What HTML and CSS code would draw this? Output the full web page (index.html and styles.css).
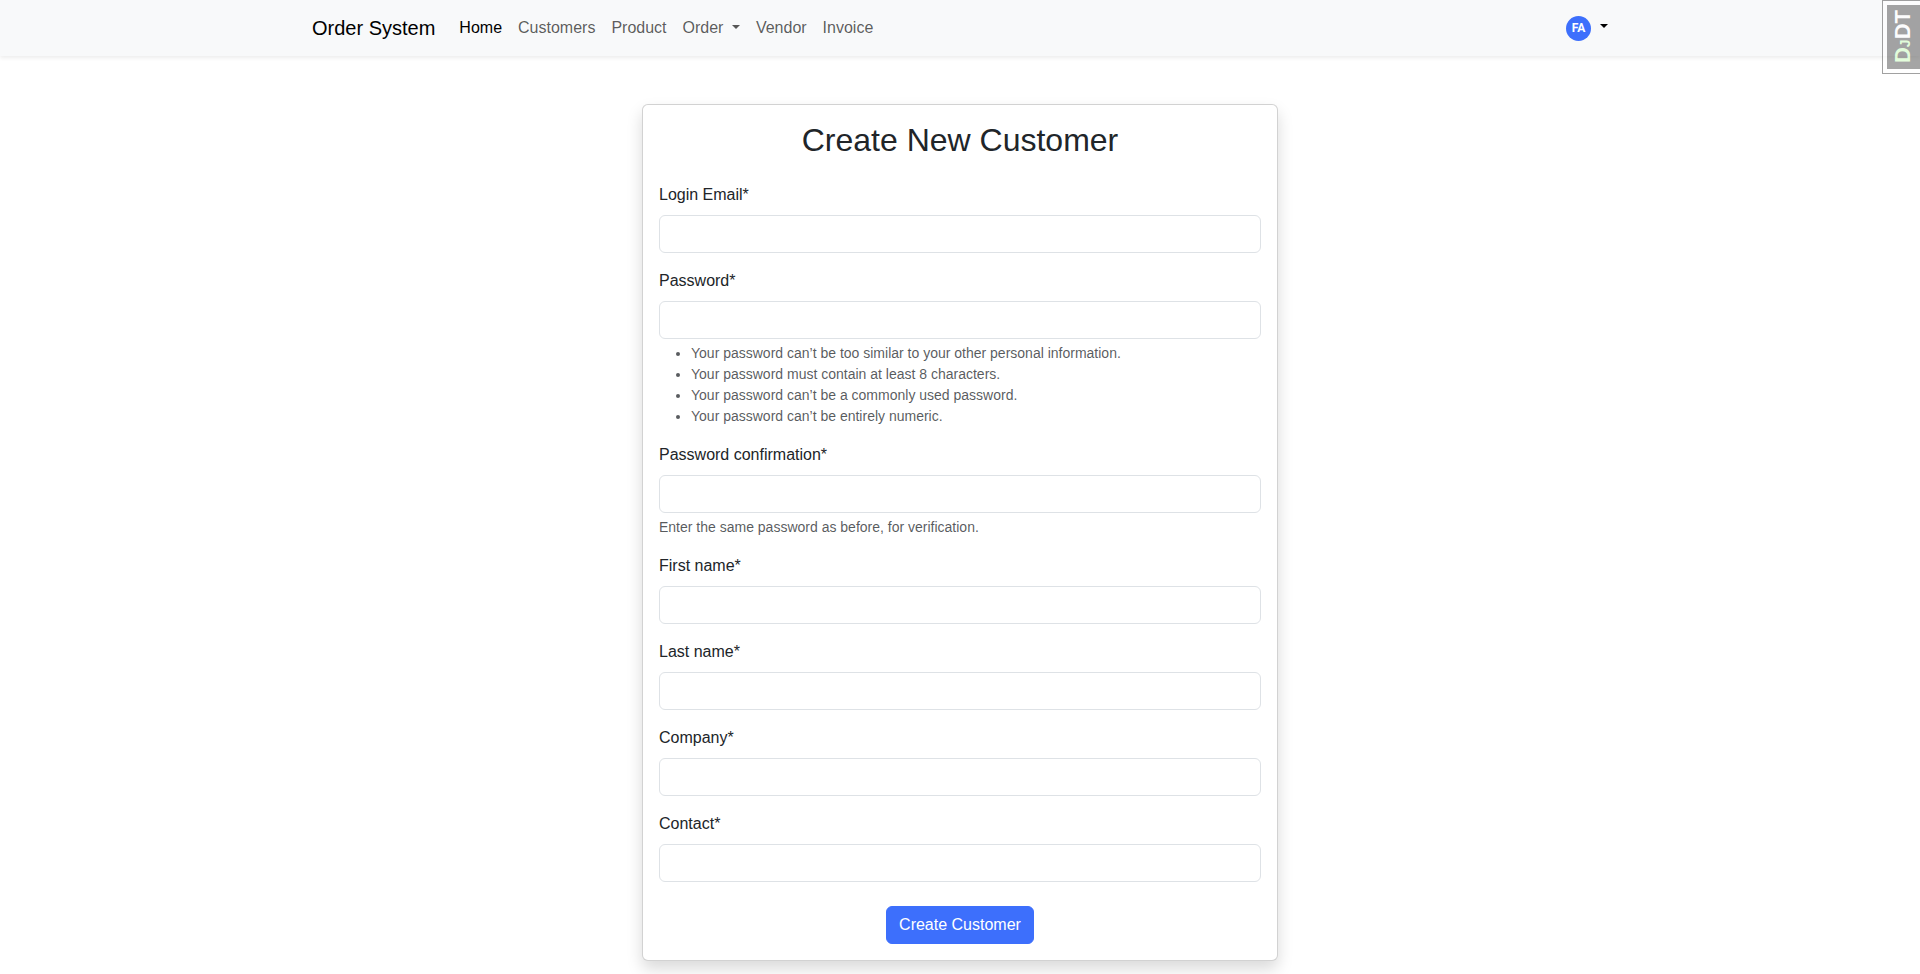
FILE: index.html
```html
<!DOCTYPE html>
<html lang="en">
<head>
  <meta charset="utf-8">
  <meta name="viewport" content="width=device-width, initial-scale=1">
  <title>Create New Customer</title>
  <link rel="stylesheet" href="styles.css">
</head>
<body>
  <header class="navbar">
    <div class="container navbar-inner">
      <a class="brand" href="#">Order System</a>
      <nav class="nav" aria-label="Main">
        <a class="nav-link active" href="#" aria-current="page">Home</a>
        <a class="nav-link" href="#">Customers</a>
        <a class="nav-link" href="#">Product</a>
        <a class="nav-link" href="#" aria-haspopup="true">Order <span class="caret"></span></a>
        <a class="nav-link" href="#">Vendor</a>
        <a class="nav-link" href="#">Invoice</a>
      </nav>
      <button class="account" type="button" aria-label="Account menu"><span class="avatar">FA</span><span class="caret"></span></button>
    </div>
  </header>

  <main class="container">
    <form class="card">
      <h1 class="title">Create New Customer</h1>
      <div class="field">
        <label for="email">Login Email*</label>
        <input class="control" id="email" type="email" required>
      </div>
      <div class="field">
        <label for="password1">Password*</label>
        <input class="control" id="password1" type="password" aria-describedby="password1-help" required>
        <ul class="help help-list" id="password1-help">
          <li>Your password can’t be too similar to your other personal information.</li>
          <li>Your password must contain at least 8 characters.</li>
          <li>Your password can’t be a commonly used password.</li>
          <li>Your password can’t be entirely numeric.</li>
        </ul>
      </div>
      <div class="field">
        <label for="password2">Password confirmation*</label>
        <input class="control" id="password2" type="password" aria-describedby="password2-help" required>
        <p class="help" id="password2-help">Enter the same password as before, for verification.</p>
      </div>
      <div class="field">
        <label for="first-name">First name*</label>
        <input class="control" id="first-name" type="text" required>
      </div>
      <div class="field">
        <label for="last-name">Last name*</label>
        <input class="control" id="last-name" type="text" required>
      </div>
      <div class="field">
        <label for="company">Company*</label>
        <input class="control" id="company" type="text" required>
      </div>
      <div class="field">
        <label for="contact">Contact*</label>
        <input class="control" id="contact" type="text" required>
      </div>
      <button class="submit" type="submit">Create Customer</button>
    </form>
  </main>

  <button class="debug-handle" type="button" title="Show toolbar"><span class="debug-face"><span class="debug-text"><span class="debug-d">D</span><span class="debug-j">J</span>DT</span></span></button>
</body>
</html>
```

FILE: styles.css
```css
*,
*::before,
*::after {
  box-sizing: border-box;
}

body {
  min-height: 100vh;
  margin: 0;
  font-family: "Liberation Sans", Arial, sans-serif;
  font-size: 16px;
  line-height: 24px;
  color: #212529;
  background: #fff;
}

button,
input {
  font: inherit;
}

.container {
  width: 100%;
  max-width: 1320px;
  margin: 0 auto;
  padding: 0 12px;
}

.navbar {
  padding: 8px 0;
  background: #f8f9fa;
  box-shadow: 0 2px 4px rgba(0, 0, 0, 0.075);
}

.navbar-inner {
  display: flex;
  align-items: center;
}

.brand {
  margin-right: 16px;
  font-size: 20px;
  line-height: 30px;
  color: #000;
  text-decoration: none;
}

.nav {
  display: flex;
}

.nav-link {
  padding: 8px;
  color: rgba(0, 0, 0, 0.65);
  text-decoration: none;
}

.nav-link.active {
  color: #000;
}

.caret {
  display: inline-block;
  margin-left: 4px;
  vertical-align: 4px;
  border-top: 4px solid;
  border-right: 4px solid transparent;
  border-left: 4px solid transparent;
}

.account {
  display: flex;
  align-items: center;
  gap: 5px;
  margin-left: auto;
  padding: 0;
  border: 0;
  background: none;
  color: #000;
}

.avatar {
  width: 25px;
  height: 25px;
  border-radius: 50%;
  background: #3d6ffc;
  color: #fff;
  font-family: Roboto, sans-serif;
  font-size: 12px;
  font-weight: 700;
  line-height: 25px;
  text-align: center;
}

.account .caret {
  margin-bottom: 4px;
}

.card {
  display: flex;
  flex-direction: column;
  gap: 16px;
  max-width: 636px;
  margin: 48px auto 0;
  padding: 16px;
  border: 1px solid rgba(0, 0, 0, 0.175);
  border-radius: 6px;
  background: #fff;
  box-shadow: 0 8px 16px rgba(0, 0, 0, 0.15);
}

.title {
  margin: 0 0 8px;
  font-size: 32px;
  font-weight: 400;
  line-height: 38px;
  text-align: center;
}

.field label {
  display: block;
  width: fit-content;
  margin-bottom: 8px;
}

.control {
  display: block;
  width: 100%;
  height: 38px;
  padding: 6px 12px;
  border: 1px solid #dee2e6;
  border-radius: 6px;
  background: #fff;
  color: inherit;
}

.help {
  margin: 4px 0 0;
  font-size: 14px;
  line-height: 21px;
  color: rgba(33, 37, 41, 0.75);
}

.help-list {
  padding-left: 32px;
}

.submit {
  align-self: center;
  margin-top: 8px;
  padding: 6px 12px;
  border: 1px solid #3d6ffc;
  border-radius: 6px;
  background: #3d6ffc;
  color: #fff;
}

/* Debug toolbar handle, pinned over the page corner */
.debug-handle {
  position: fixed;
  top: 0;
  right: 0;
  padding: 0;
  border: 1px solid #444;
  border-right: 0;
  background: #fff;
  opacity: 0.5;
}

.debug-face {
  display: flex;
  align-items: center;
  justify-content: center;
  width: 37px;
  height: 72px;
  border: 4px solid #fff;
  border-right: 0;
  background: #4c4c4c;
}

.debug-text {
  writing-mode: vertical-rl;
  text-orientation: sideways;
  transform: rotate(180deg);
  color: #fff;
  font-size: 22px;
  font-weight: 700;
  line-height: 24px;
}

.debug-d,
.debug-j {
  color: #cfb;
}

.debug-j {
  font-size: 14px;
}
```
